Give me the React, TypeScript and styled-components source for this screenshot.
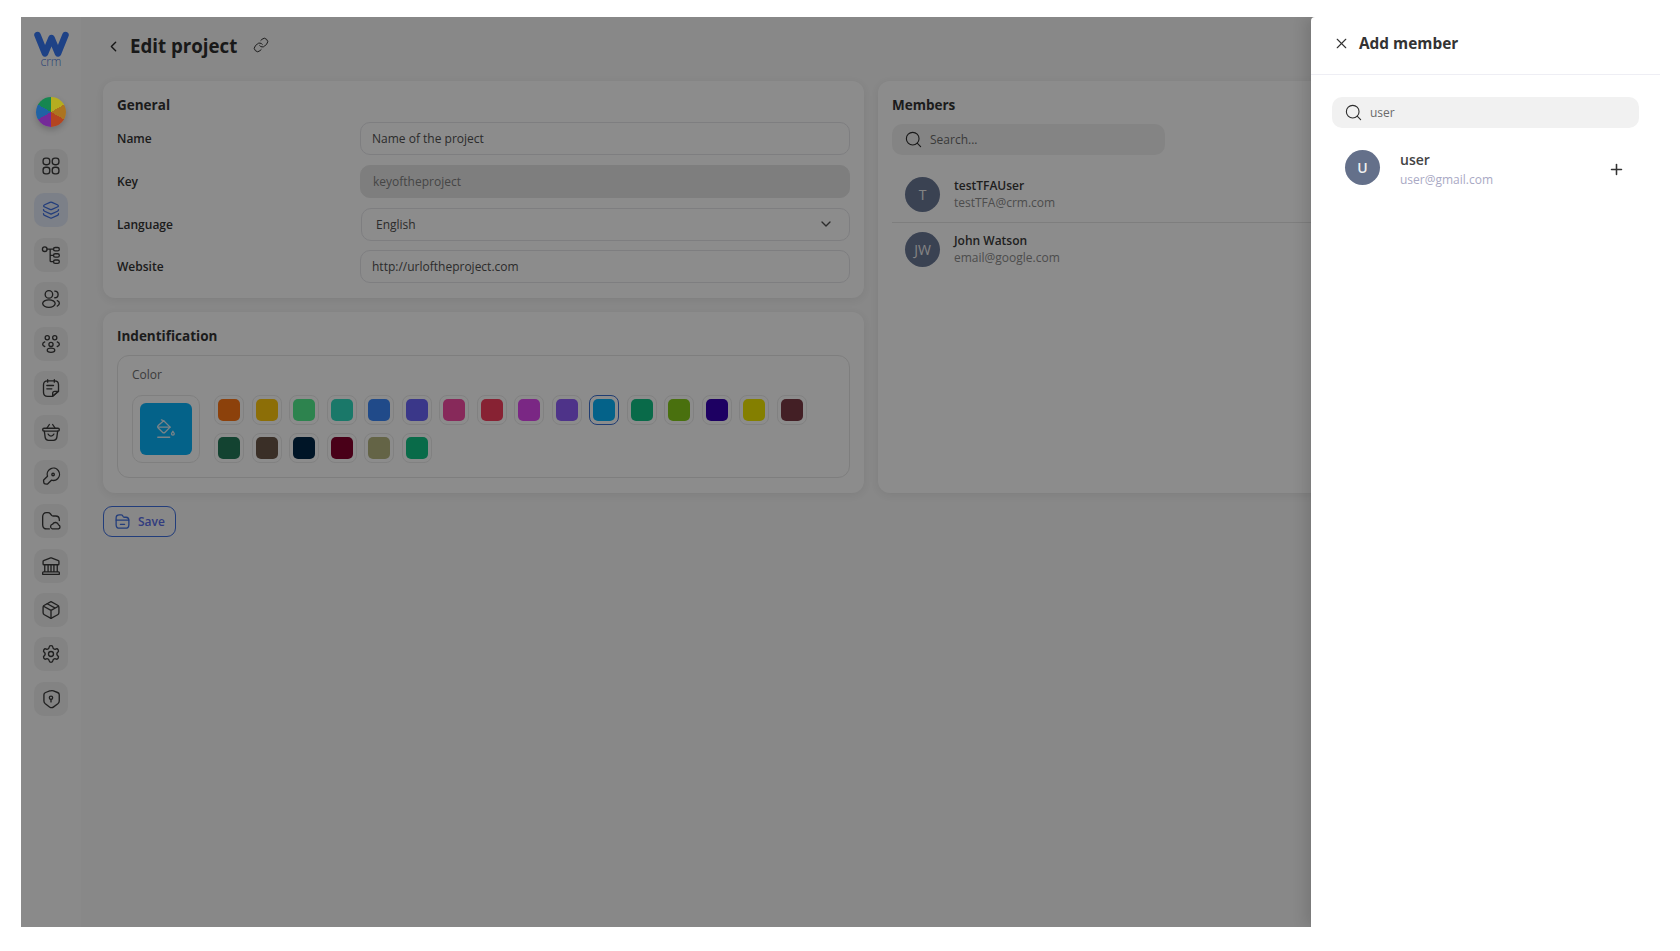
/**
 * Edit project page with the Add member drawer open
 */

import React from 'react';
import styled, { createGlobalStyle } from 'styled-components';
import { ChevronDown, ChevronLeft, Link, Plus, Search, Settings, X } from 'lucide-react';

const GlobalStyle = createGlobalStyle`
  html, body {
    margin: 0;
    background: #fff;
    font-family: 'Open Sans', 'Liberation Sans', sans-serif;
  }
  * { box-sizing: border-box; }
`;

const Page = styled.div`
  width: 1680px;
  height: 951px;
  padding: 17px 20px 24px 21px;
  overflow: hidden;
`;

const Frame = styled.div`
  position: relative;
  display: flex;
  height: 100%;
  overflow: hidden;
  background: #f7f7f7;
`;

const Sidebar = styled.aside`
  width: 60px;
  flex: none;
  display: flex;
  flex-direction: column;
  align-items: center;
  padding-top: 14px;
  background: #fbfbfb;
`;

const Logo = styled.div`
  display: flex;
  flex-direction: column;
  align-items: center;
  height: 52px;
  margin-bottom: 14px;
`;

const LogoText = styled.span`
  margin-top: -2px;
  font-size: 12px;
  font-weight: 300;
  line-height: 13px;
  color: #4a78d8;
`;

// sits above the dim layer: it keeps its bright colours in the reference
const Pie = styled.div`
  position: relative;
  z-index: 1;
  width: 30px;
  height: 30px;
  flex: none;
  margin: 0 1px 22px 0;
  border-radius: 50%;
  box-shadow: 0 3px 6px rgba(0, 0, 0, 0.2);
  background: conic-gradient(#b5ad20 0 60deg, #ac7420 60deg 120deg, #b44520 120deg 180deg, #742a98 180deg 240deg, #2062a4 240deg 300deg, #168650 300deg 360deg);
`;

const Nav = styled.nav`
  display: flex;
  flex-direction: column;
  gap: 10.4px;
`;

const NavItem = styled.div<{ $active?: boolean }>`
  width: 34px;
  height: 34px;
  display: flex;
  align-items: center;
  justify-content: center;
  border-radius: 10px;
  background: ${({ $active }) => ($active ? '#e2e9f8' : '#eeeeee')};
  color: ${({ $active }) => ($active ? '#3f6fe0' : '#3a3a3a')};
`;

const Main = styled.main`
  flex: 1;
  min-width: 0;
  padding: 0 21px 0 22px;
`;

const Header = styled.header`
  height: 58px;
  margin-bottom: 6px;
  display: flex;
  align-items: center;
  gap: 8px;
  color: #2b2b2b;
`;

const BackIcon = styled(ChevronLeft)`
  margin-left: 2px;
`;

const PageTitle = styled.h1`
  margin: 0 8px 0 0;
  font-size: 18.7px;
  font-weight: 700;
  line-height: 28px;
  color: #2e2e2e;
`;

const LinkIcon = styled(Link)`
  margin-top: -2px;
  color: #333;
`;

const Columns = styled.div`
  display: grid;
  grid-template-columns: 1fr 1fr;
  gap: 14px;
`;

const Stack = styled.div`
  display: flex;
  flex-direction: column;
  gap: 14px;
`;

const Card = styled.section`
  padding: 15px 14px;
  border-radius: 12px;
  background: #ffffff;
  box-shadow: 0 2px 8px rgba(0, 0, 0, 0.07);
`;

const CardTitle = styled.h2<{ $gap?: number }>`
  margin: 0 0 ${({ $gap }) => $gap ?? 8}px;
  font-size: 13.5px;
  font-weight: 700;
  line-height: 18px;
  color: #333;
`;

const Form = styled.div`
  display: grid;
  grid-template-columns: 243px 1fr;
  row-gap: 9.8px;
  align-items: center;
`;

const Label = styled.label`
  font-size: 12px;
  font-weight: 600;
  color: #333;
`;

const Field = styled.div<{ $disabled?: boolean }>`
  height: 33px;
  display: flex;
  align-items: center;
  justify-content: space-between;
  padding: ${({ $disabled }) => ($disabled ? '0 11px 0 12px' : '0 11px')};
  border: 1px solid ${({ $disabled }) => ($disabled ? '#e6e6e6' : '#e6e6ea')};
  border-radius: 10px;
  background: ${({ $disabled }) => ($disabled ? '#e6e6e6' : '#ffffff')};
  font-size: 12px;
  color: ${({ $disabled }) => ($disabled ? '#808080' : '#505050')};
`;

const SelectField = styled(Field)`
  margin-left: 1px;
  padding: 0 15px 0 14px;
`;

const ColorBox = styled.div`
  padding: 10px 14px 14px;
  border: 1px solid #e6e6e6;
  border-radius: 12px;
`;

const ColorLabel = styled.div`
  margin-bottom: 11px;
  font-size: 12px;
  line-height: 18px;
  color: #6e6e6e;
`;

const ColorRow = styled.div`
  display: flex;
  gap: 14px;
`;

const Preview = styled.div`
  width: 68px;
  height: 68px;
  flex: none;
  padding: 7px;
  border: 1px solid #e8e8e8;
  border-radius: 10px;
`;

const PreviewFill = styled.div`
  width: 100%;
  height: 100%;
  display: flex;
  align-items: center;
  justify-content: center;
  border-radius: 6px;
  background: #09b2fa;
  color: #dfeff6;
`;

const Swatches = styled.div`
  display: grid;
  grid-template-columns: repeat(16, 30px);
  grid-auto-rows: 30px;
  gap: 7.5px;
`;

const Swatch = styled.div<{ $color: string; $selected?: boolean }>`
  padding: 3px;
  border: 1px solid ${({ $selected }) => ($selected ? '#3b6fd0' : '#ebebeb')};
  border-radius: 8px;

  &::after {
    content: '';
    display: block;
    width: 100%;
    height: 100%;
    border-radius: 5px;
    background: ${({ $color }) => $color};
  }
`;

const SaveButton = styled.button`
  height: 31px;
  margin-top: 13px;
  padding: 0 10px;
  display: flex;
  align-items: center;
  gap: 7px;
  border: 1px solid #3f6fe0;
  border-radius: 9px;
  background: transparent;
  font-family: inherit;
  font-size: 12px;
  font-weight: 600;
  color: #5b6ee8;
`;

const SearchBox = styled.div<{ $width: number }>`
  width: ${({ $width }) => $width}px;
  height: 31px;
  display: flex;
  align-items: center;
  gap: 7px;
  padding: 0 12px;
  border-radius: 10px;
  background: #f1f1f1;
  font-size: 12px;
  color: #6a6a6a;
`;

const SearchIcon = styled(Search)`
  color: #2e2e2e;
`;

const MemberList = styled.div`
  margin-top: 12px;
`;

const MemberRow = styled.div`
  height: 54.5px;
  display: flex;
  align-items: center;
  gap: 14px;
  padding-left: 13px;

  & + & {
    border-top: 1px solid #e6e6e6;
  }
`;

const Avatar = styled.div<{ $color: string }>`
  width: 35px;
  height: 35px;
  flex: none;
  display: flex;
  align-items: center;
  justify-content: center;
  border-radius: 50%;
  background: ${({ $color }) => $color};
  font-size: 14px;
  color: #f0f0f0;
`;

const ResultAvatar = styled(Avatar)`
  font-weight: 600;
`;

const MemberName = styled.div`
  font-size: 12px;
  font-weight: 600;
  line-height: 17px;
  color: #3a3a3a;
`;

const MemberEmail = styled.div`
  font-size: 12px;
  line-height: 17px;
  color: #8c8c8c;
`;

const Dim = styled.div`
  position: absolute;
  inset: 0;
  background: rgba(0, 0, 0, 0.45);
`;

const Drawer = styled.aside`
  position: absolute;
  z-index: 2;
  top: 0;
  right: 0;
  bottom: 0;
  width: 349px;
  border-top-left-radius: 4px;
  background: #fff;
  box-shadow: -6px 0 14px rgba(0, 0, 0, 0.12);
`;

const DrawerHeader = styled.div`
  height: 58px;
  display: flex;
  align-items: center;
  gap: 9px;
  padding: 0 0 5px 22px;
  border-bottom: 1px solid #eeeef4;
  color: #333;
`;

const DrawerTitle = styled.h2`
  margin: 0;
  font-size: 15.4px;
  font-weight: 700;
  color: #333;
`;

const DrawerBody = styled.div`
  padding: 22px 21px;
`;

const ResultRow = styled.div`
  display: flex;
  align-items: flex-start;
  gap: 20px;
  margin-top: 21.5px;
  padding: 0 14px 0 13px;
`;

const ResultText = styled.div`
  flex: 1;
`;

const ResultName = styled.div`
  font-size: 14px;
  font-weight: 600;
  line-height: 20px;
  color: #444;
`;

const ResultEmail = styled.div`
  font-size: 12px;
  line-height: 20px;
  color: #a9a9c4;
`;

const AddIcon = styled(Plus)`
  margin-top: 11px;
  color: #333;
`;

const NavIcon: React.FC<{ children: React.ReactNode }> = ({ children }) => (
  <svg width="20" height="20" viewBox="0 0 24 24" fill="none" stroke="currentColor" strokeWidth="1.6" strokeLinecap="round" strokeLinejoin="round">
    {children}
  </svg>
);

const navIcons: React.ReactNode[] = [
  <NavIcon key="category">
    <rect x="2.5" y="2.5" width="8" height="8" rx="3.2" />
    <rect x="13.5" y="2.5" width="8" height="8" rx="3.2" />
    <rect x="2.5" y="13.5" width="8" height="8" rx="3.2" />
    <rect x="13.5" y="13.5" width="8" height="8" rx="3.2" />
  </NavIcon>,
  <NavIcon key="layers">
    <path d="M13.2 2.8l6.4 2.9c1.6.7 1.6 2 0 2.7l-6.4 2.9c-.7.3-1.7.3-2.4 0L4.4 8.4c-1.6-.7-1.6-2 0-2.7l6.4-2.9c.7-.3 1.7-.3 2.4 0z" />
    <path d="M3 11.5c0 .8.6 1.7 1.3 2l7 3.1c.5.2 1 .2 1.5 0l7-3.1c.7-.3 1.2-1.2 1.2-2" />
    <path d="M3 16.5c0 .9.5 1.7 1.3 2l7 3.1c.5.2 1 .2 1.5 0l7-3.1c.8-.3 1.2-1.1 1.2-2" />
  </NavIcon>,
  <NavIcon key="hierarchy">
    <circle cx="4.5" cy="5" r="2.8" />
    <path d="M7.3 5H15M11 5v14a1 1 0 0 0 1 1h3M11 12.5h4" />
    <rect x="15" y="3" width="7" height="4" rx="2" />
    <rect x="15" y="10.5" width="7" height="4" rx="2" />
    <rect x="15" y="18" width="7" height="4" rx="2" />
  </NavIcon>,
  <NavIcon key="users">
    <circle cx="9.5" cy="6.5" r="4.5" />
    <ellipse cx="9.5" cy="17.5" rx="7.5" ry="4.5" />
    <path d="M16.5 2.5a4 4 0 0 1 0 8M19.5 14c1.7.5 2.5 1.8 2.5 3.2s-.8 2.8-2.5 3.3" />
  </NavIcon>,
  <NavIcon key="group">
    <circle cx="7.5" cy="4.5" r="2.5" />
    <circle cx="16.5" cy="4.5" r="2.5" />
    <path d="M4.5 9.5C2.8 10.2 2 11.2 2 12.3s.8 2.2 2.5 2.7M19.5 9.5c1.7.7 2.5 1.7 2.5 2.8s-.8 2.2-2.5 2.7" />
    <circle cx="12" cy="12.5" r="2.5" />
    <ellipse cx="12" cy="19.5" rx="4.5" ry="2.5" />
  </NavIcon>,
  <NavIcon key="note">
    <path d="M8 2v3M16 2v3M7 9h8M7 13h6" />
    <path d="M14 22H8c-3.5 0-5-2-5-5V8c0-2.5 1.5-4.5 5-4.5h8c3.5 0 5 2 5 4.5v8z" />
    <path d="M21 16l-7 6v-3.5c0-1.5.7-2.5 2.5-2.5z" />
  </NavIcon>,
  <NavIcon key="basket">
    <rect x="2" y="7.5" width="20" height="3.5" rx="1.7" />
    <path d="M7 7.5L10 3M17 7.5L14 3" />
    <path d="M4 11l1 7.5c.3 2 1.5 3.5 4 3.5h6c2.500 0 3.7-1.5 4-3.5l1-7.5" />
    <path d="M8.5 14.5c.8 1.7 2 2.5 3.5 2.5s2.7-.8 3.5-2.5" />
  </NavIcon>,
  <NavIcon key="key">
    <path d="M20 14a7.4 7.4 0 0 1-7.5 1.8l-4.3 4.3c-.3.3-.9.5-1.3.4l-2.1-.3c-.7-.1-1.3-.7-1.4-1.400l-.3-2.100c-.1-.4.1-1 .4-1.3l4.300-4.300A7.400 7.400 0 1 1 20 14z" />
    <circle cx="14.5" cy="9" r="1.5" />
  </NavIcon>,
  <NavIcon key="folder">
    <path d="M10 21.5H7c-3 0-5-1.500-5-5V7c0-3 1.500-5 4.500-5h2c1.500 0 2 .4 2.700 1.300l1.500 2c.4.5.7.7 1.800.7h3c3 0 4.500 1.500 4.500 4.500v1" />
    <path d="M13.5 21.5a3 3 0 0 1 .5-5.800 3.800 3.800 0 0 1 7 1 2.500 2.500 0 0 1 0 4.800z" />
  </NavIcon>,
  <NavIcon key="bank">
    <path d="M12.4 2.2l8.500 3.400c.3.1.6.5.6.9v3c0 .6-.4 1-1 1h-17c-.6 0-1-.4-1-1v-3c0-.4.3-.8.6-.9l8.500-3.400c.2-.1.6-.1.8 0z" />
    <path d="M22 22H2v-2c0-.6.4-1 1-1h18c.6 0 1 .4 1 1zM4.5 10.500V19M8.5 10.500V19M12 10.500V19M15.500 10.500V19M19.500 10.500V19" />
  </NavIcon>,
  <NavIcon key="box">
    <path d="M12 2l8 4.300c1 .5 1.500 1.500 1.500 2.700v6c0 1.200-.5 2.200-1.500 2.700L12 22l-8-4.300c-1-.5-1.500-1.500-1.500-2.700V9c0-1.200.5-2.200 1.500-2.700z" />
    <path d="M3 7.500l9 5 9-5M12 12.500V22M7.500 4.500l9 5" />
  </NavIcon>,
  <Settings key="settings" size={20} strokeWidth={1.6} />,
  <NavIcon key="shield">
    <path d="M10.5 2.300L5.500 4.200C4.400 4.600 3.500 5.900 3.500 7v7.400c0 1.200.8 2.700 1.700 3.400l5 3.700c1.400 1 3.600 1 5 0l5-3.700c.9-.7 1.700-2.200 1.700-3.400V7c0-1.100-.9-2.400-2-2.800l-5-1.900c-.8-.3-2.600-.3-3.400 0z" />
    <circle cx="12" cy="10.5" r="2" />
    <path d="M12 12.5v3" />
  </NavIcon>,
];

const swatchColors = [
  '#ff7715', '#ffc80e', '#52ee8e', '#30dac0', '#3b88fa', '#6b64fa', '#f64ba4', '#f63e5d',
  '#df47f1', '#8f5dfa', '#09b2fa', '#12c186', '#86cd1b', '#3600b3', '#f1e800', '#7a3944',
  '#247a59', '#6b5647', '#002747', '#86002d', '#b6b680', '#12c486',
];

const members = [
  { initials: 'T', name: 'testTFAUser', email: 'testTFA@crm.com' },
  { initials: 'JW', name: 'John Watson', email: 'email@google.com' },
];

const fields = [
  { label: 'Name', value: 'Name of the project' },
  { label: 'Key', value: 'keyoftheproject', disabled: true },
  { label: 'Language', value: 'English', select: true },
  { label: 'Website', value: 'http://urloftheproject.com' },
];

export default function App() {
  return (
    <Page>
      <GlobalStyle />
      <Frame>
        <Sidebar>
          <Logo>
            <svg width="35" height="26" viewBox="0 0 35 26" fill="none" stroke="#3878f5" strokeWidth="6.5" strokeLinecap="round" strokeLinejoin="round">
              <path d="M3.5 4L11 22.5 17.5 7 24 22.5 31.5 4" />
            </svg>
            <LogoText>crm</LogoText>
          </Logo>
          <Pie />
          <Nav>
            {navIcons.map((icon, i) => (
              <NavItem key={i} $active={i === 1}>{icon}</NavItem>
            ))}
          </Nav>
        </Sidebar>

        <Main>
          <Header>
            <BackIcon size={17} />
            <PageTitle>Edit project</PageTitle>
            <LinkIcon size={16} strokeWidth={1.5} />
          </Header>

          <Columns>
            <Stack>
              <Card>
                <CardTitle>General</CardTitle>
                <Form>
                  {fields.map(field => (
                    <React.Fragment key={field.label}>
                      <Label>{field.label}</Label>
                      {field.select ? (
                        <SelectField>
                          {field.value}
                          <ChevronDown size={16} strokeWidth={2} />
                        </SelectField>
                      ) : (
                        <Field $disabled={field.disabled}>{field.value}</Field>
                      )}
                    </React.Fragment>
                  ))}
                </Form>
              </Card>

              <Card>
                <CardTitle $gap={10}>Indentification</CardTitle>
                <ColorBox>
                  <ColorLabel>Color</ColorLabel>
                  <ColorRow>
                    <Preview>
                      <PreviewFill>
                        <svg width="22" height="22" viewBox="0 0 24 24" fill="none" stroke="currentColor" strokeWidth="1.4" strokeLinecap="round" strokeLinejoin="round">
                          <path d="M9.5 3l7 7-5.5 5.5a2 2 0 0 1-2.8 0L3.5 11a2 2 0 0 1 0-2.8z" />
                          <path d="M3.5 10h13M7 2l2.5 1" />
                          <path d="M19.5 14.5c1 1.2 1.5 2 1.5 2.7a1.5 1.5 0 0 1-3 0c0-.7.5-1.5 1.5-2.7z" />
                          <path d="M3 21h13" />
                        </svg>
                      </PreviewFill>
                    </Preview>
                    <Swatches>
                      {swatchColors.map((color, i) => (
                        <Swatch key={i} $color={color} $selected={i === 10} />
                      ))}
                    </Swatches>
                  </ColorRow>
                </ColorBox>
              </Card>
            </Stack>

            <Card>
              <CardTitle $gap={10}>Members</CardTitle>
              <SearchBox $width={273}>
                <SearchIcon size={19} strokeWidth={1.4} />
                Search...
              </SearchBox>
              <MemberList>
                {members.map(member => (
                  <MemberRow key={member.name}>
                    <Avatar $color="#6a7896">{member.initials}</Avatar>
                    <div>
                      <MemberName>{member.name}</MemberName>
                      <MemberEmail>{member.email}</MemberEmail>
                    </div>
                  </MemberRow>
                ))}
              </MemberList>
            </Card>
          </Columns>

          <SaveButton>
            <svg width="17" height="17" viewBox="0 0 24 24" fill="none" stroke="#3f6fe0" strokeWidth="1.8" strokeLinecap="round" strokeLinejoin="round">
              <path d="M3 7c0-3 1.5-4.500 4.500-4.500H10c1 0 1.500.3 2 1l1 1.500c.5.7 1 1 2 1h2c3 0 4 1.500 4 4.500v6c0 3-1.500 5-5 5H8c-3.500 0-5-2-5-5z" />
              <path d="M3 10h18M9 16h6" />
            </svg>
            Save
          </SaveButton>
        </Main>

        <Dim />

        <Drawer>
          <DrawerHeader>
            <X size={17} strokeWidth={1.6} />
            <DrawerTitle>Add member</DrawerTitle>
          </DrawerHeader>
          <DrawerBody>
            <SearchBox $width={307}>
              <SearchIcon size={19} strokeWidth={1.4} />
              user
            </SearchBox>
            <ResultRow>
              <ResultAvatar $color="#64708a">U</ResultAvatar>
              <ResultText>
                <ResultName>user</ResultName>
                <ResultEmail>user@gmail.com</ResultEmail>
              </ResultText>
              <AddIcon size={17} strokeWidth={2.2} />
            </ResultRow>
          </DrawerBody>
        </Drawer>
      </Frame>
    </Page>
  );
}
